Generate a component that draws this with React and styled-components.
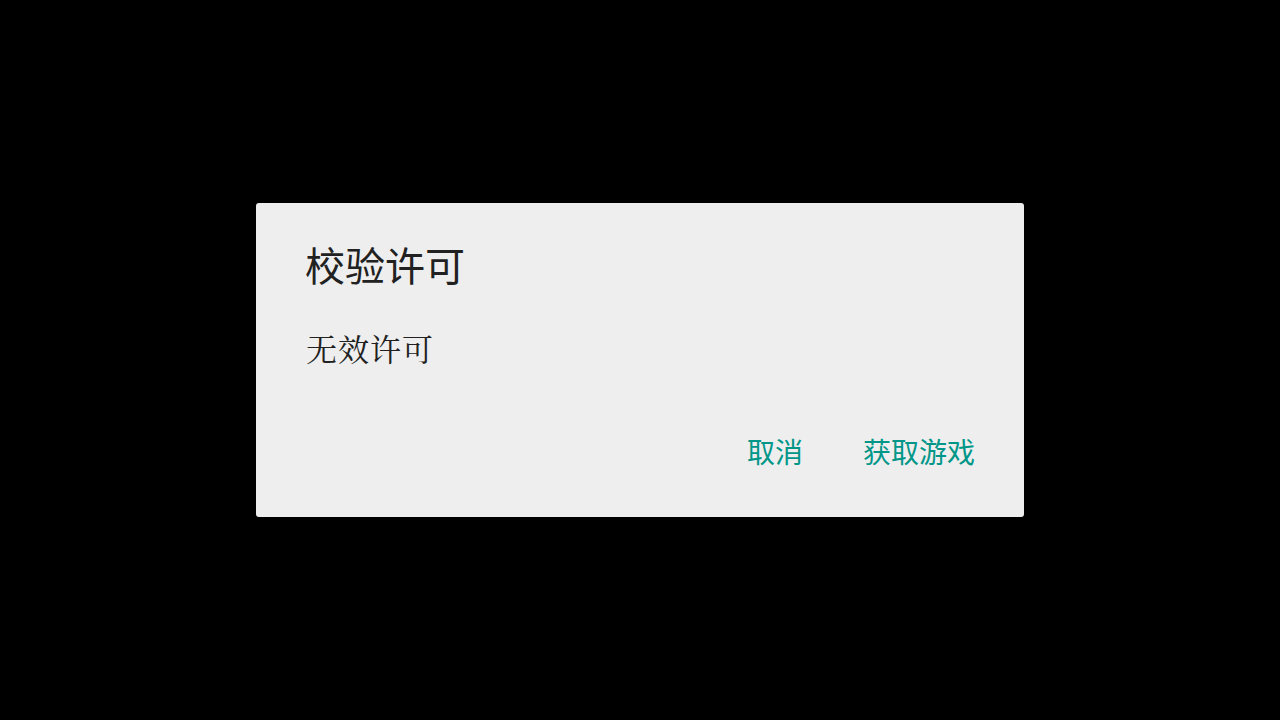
import React from 'react';
import styled, { createGlobalStyle } from 'styled-components';

const GlobalStyle = createGlobalStyle`
  html, body {
    margin: 0;
    padding: 0;
    background: #000;
  }
  #root {
    height: 100vh;
  }
`;

const Screen = styled.div`
  height: 720px;
  width: 1280px;
  background: #000;
  display: flex;
  align-items: center;
  justify-content: center;
`;

const Dialog = styled.div`
  width: 768px;
  height: 314px;
  box-sizing: border-box;
  background: #eeeeee;
  border-radius: 3px;
  padding: 37px 49px 0 49px;
  display: flex;
  flex-direction: column;
`;

const Title = styled.h1`
  margin: 0;
  font-family: "Noto Sans CJK SC", "Noto Sans", sans-serif;
  font-weight: 400;
  font-size: 40px;
  line-height: 48px;
  color: #212121;
`;

const Message = styled.p`
  margin: 38px 0 0 1px;
  font-family: "AR PL UKai CN", "KaiTi", "Noto Serif CJK SC", serif;
  font-size: 31px;
  letter-spacing: 1px;
  line-height: 44px;
  color: #212121;
`;

const Actions = styled.div`
  margin-top: auto;
  margin-bottom: 46px;
  display: flex;
  justify-content: flex-end;
  gap: 60px;
`;

const ActionButton = styled.button`
  border: none;
  background: none;
  padding: 0;
  font-family: "Noto Sans CJK SC", "Noto Sans", sans-serif;
  font-size: 28px;
  line-height: 40px;
  color: #009688;
  cursor: pointer;
`;

export default function App() {
  return (
    <>
      <GlobalStyle />
      <Screen>
        <Dialog>
          <Title>校验许可</Title>
          <Message>无效许可</Message>
          <Actions>
            <ActionButton>取消</ActionButton>
            <ActionButton>获取游戏</ActionButton>
          </Actions>
        </Dialog>
      </Screen>
    </>
  );
}
